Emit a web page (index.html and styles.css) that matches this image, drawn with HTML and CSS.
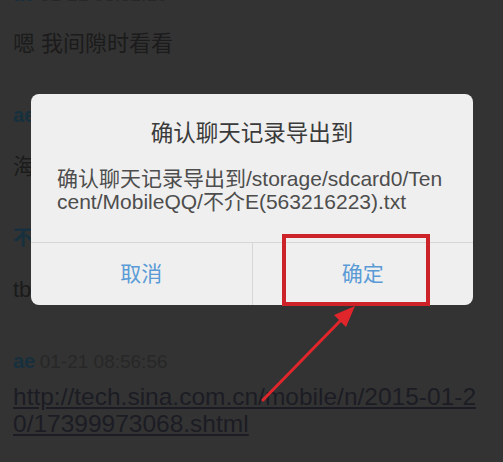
FILE: index.html
```html
<!DOCTYPE html>
<html lang="zh-CN">

<head>
  <meta charset="utf-8">
  <meta name="viewport" content="width=device-width, initial-scale=1.0">
  <title>导出聊天记录</title>
  <link rel="stylesheet" href="styles.css">
</head>

<body>
  <div class="chat">
    <div class="msg first">
      <div class="msg-head"><span class="name">ae</span> <span class="time">01-21 08:52:10</span></div>
      <div class="msg-text">嗯 我间隙时看看</div>
    </div>
    <div class="msg">
      <div class="msg-head"><span class="name">ae</span> <span class="time">01-21 08:54:31</span></div>
      <div class="msg-text">海报我晚点发给你</div>
    </div>
    <div class="msg">
      <div class="msg-head"><span class="name">不介E</span> <span class="time">01-21 08:55:02</span></div>
      <div class="msg-text">tb 好的</div>
    </div>
    <div class="msg">
      <div class="msg-head near"><span class="name">ae</span> <span class="time">01-21 08:56:56</span></div>
      <a class="msg-link" href="#">http://tech.sina.com.cn/mobile/n/2015-01-2<br>0/17399973068.shtml</a>
    </div>
  </div>

  <!-- export dialog -->
  <div class="dialog">
    <div class="dialog-title">确认聊天记录导出到</div>
    <div class="dialog-text">确认聊天记录导出到/storage/sdcard0/Ten<br>cent/MobileQQ/不介E(563216223).txt</div>
    <div class="dialog-buttons">
      <div class="btn">取消</div>
      <div class="btn">确定</div>
    </div>
  </div>

  <!-- annotation -->
  <div class="mark"></div>
  <svg class="arrow" width="503" height="462" viewBox="0 0 503 462">
    <line x1="263" y1="400" x2="342" y2="319" stroke="#e0252b" stroke-width="3" stroke-linecap="round" />
    <polygon points="355,306 346,327 334,315" fill="#e0252b" />
  </svg>
</body>

</html>
```

FILE: styles.css
```css
html,
body {
  margin: 0;
  padding: 0;
}

body {
  width: 503px;
  height: 462px;
  overflow: hidden;
  position: relative;
  background-color: #333333;
  font-family: "Liberation Sans", "Noto Sans CJK SC", sans-serif;
}

.chat {
  padding: 0 13px;
}

.msg {
  margin-bottom: 44px;
}

.msg.first {
  margin-top: -18px;
}

.msg-head {
  height: 24px;
  line-height: 24px;
  margin-bottom: 25px;
  white-space: nowrap;
}

.first .msg-head {
  margin-bottom: 23px;
}

.msg-head.near {
  margin-bottom: 10px;
}

.name {
  color: #17303d;
  font-size: 20px;
  font-weight: 700;
}

.time {
  color: #272727;
  font-size: 19px;
}

.msg-text {
  color: #1b1b1b;
  font-size: 22px;
  line-height: 30px;
  white-space: nowrap;
}

.msg-link {
  display: block;
  color: #1c1c24;
  font-size: 24.5px;
  line-height: 27px;
  white-space: nowrap;
  text-decoration: underline;
}

.dialog {
  position: absolute;
  left: 31px;
  top: 94px;
  width: 442px;
  padding-top: 25px;
  background-color: #efefef;
  border-radius: 8px;
  overflow: hidden;
}

.dialog-title {
  color: #3a3a3a;
  font-size: 22.5px;
  line-height: 30px;
  text-align: center;
  margin-bottom: 18px;
}

.dialog-text {
  color: #4d4d4d;
  font-size: 21px;
  line-height: 23px;
  padding-left: 26px;
  margin-bottom: 29px;
  white-space: nowrap;
}

.dialog-buttons {
  display: flex;
  border-top: 1px solid #d6d6d6;
}

.btn {
  flex: 1;
  height: 62px;
  line-height: 62px;
  text-align: center;
  color: #5a9bd6;
  font-size: 21px;
}

.btn + .btn {
  border-left: 1px solid #d6d6d6;
}

.mark {
  position: absolute;
  left: 282px;
  top: 234px;
  width: 148px;
  height: 72px;
  box-sizing: border-box;
  border: 4px solid #cd2228;
}

.arrow {
  position: absolute;
  left: 0;
  top: 0;
}
```
